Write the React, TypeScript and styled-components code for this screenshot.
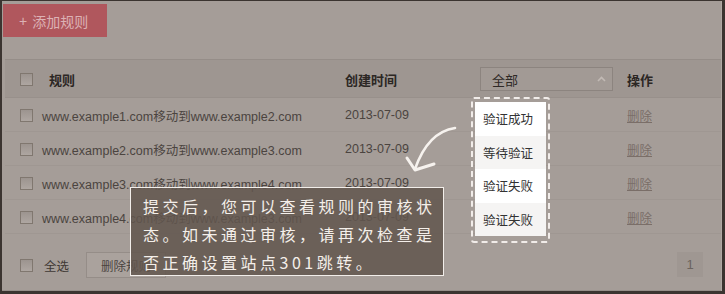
import { FC } from "react";
import styled, { createGlobalStyle } from "styled-components";

const GlobalStyle = createGlobalStyle`
  html, body {
    margin: 0;
    padding: 0;
    background: #3b3430;
  }
  body {
    font-family: "Liberation Sans", "Noto Sans CJK SC", sans-serif;
  }
`;

const Frame = styled.div`
  width: 725px;
  height: 294px;
  box-sizing: border-box;
  padding: 1px 3px 3px 2px;
  background: #3b3430;
`;

const Panel = styled.div`
  position: relative;
  height: 100%;
  background: #a59d98;
  box-shadow: inset -1px 0 0 #b0a8a3, inset 0 -1px 0 #968e89;
  display: flex;
  flex-direction: column;
  overflow: hidden;
`;

const Toolbar = styled.div`
  height: 58px;
  box-sizing: border-box;
  padding: 3px 0 0 1px;
`;

const AddButton = styled.button`
  width: 104px;
  height: 33px;
  border: none;
  background: #b0575d;
  color: #dcb2b5;
  font-family: inherit;
  font-size: 14px;
  display: flex;
  align-items: center;
  gap: 5px;
  padding: 0 0 0 16px;
`;

const Plus = styled.span`
  font-size: 14px;
  line-height: 1;
`;

const Table = styled.div`
  margin: 0 1px 0 3px;
  border-top: 1px solid #958d88;
`;

const Row = styled.div<{ head?: boolean }>`
  display: grid;
  grid-template-columns: 22px 303px 135px 147px 1fr;
  align-items: center;
  height: ${({ head }) => (head ? "38px" : "34px")};
  padding-left: 15px;
  background: ${({ head }) => (head ? "#9e9691" : "transparent")};
  box-shadow: inset 0 -1px 0 rgba(0, 0, 0, 0.035);
  font-size: ${({ head }) => (head ? "13px" : "12.5px")};
  font-weight: ${({ head }) => (head ? 700 : 400)};
  color: ${({ head }) => (head ? "#2c2724" : "#4b4440")};
`;

const HeadLabel = styled.span`
  padding-left: 7px;
`;

const Check = styled.span`
  display: block;
  width: 11px;
  height: 11px;
  border: 1px solid #80776f;
  background: linear-gradient(#9c948f, #aea6a1);
`;

const Select = styled.div`
  width: 133px;
  height: 24px;
  box-sizing: border-box;
  border: 1px solid #8c847f;
  background: #a29a95;
  display: flex;
  align-items: center;
  justify-content: space-between;
  padding: 0 6px 0 11px;
  font-weight: 400;
  color: #2e2926;
`;

const Caret = styled.svg`
  width: 9px;
  height: 6px;
`;

const DeleteLink = styled.a`
  color: #7a6e68;
  text-decoration: underline;
`;

const Footer = styled.div`
  flex: 1;
  display: flex;
  align-items: flex-start;
  padding: 18px 19px 0 18px;
`;

const SelectAll = styled.label`
  display: flex;
  align-items: center;
  gap: 11px;
  height: 26px;
  font-size: 12.5px;
  color: #3e3834;
`;

const FooterButton = styled.button`
  margin-left: 17px;
  height: 26px;
  padding: 0 14px;
  border: 1px solid #958d88;
  background: #aaa29d;
  font-family: inherit;
  font-size: 12.5px;
  color: #4b4440;
`;

const Pager = styled.span`
  margin-left: auto;
  width: 26px;
  height: 25px;
  background: #9f9792;
  color: #6b635e;
  font-size: 13px;
  display: flex;
  align-items: center;
  justify-content: center;
`;

const Dropdown = styled.div`
  position: absolute;
  left: 469px;
  top: 96px;
  width: 79px;
  box-sizing: border-box;
  border: 2px dashed #f1ece9;
  border-radius: 3px;
  padding: 3px 2px 5px 2px;
`;

const Option = styled.div<{ shade?: boolean }>`
  height: 33.5px;
  display: flex;
  align-items: center;
  padding-left: 8px;
  background: ${({ shade }) => (shade ? "#f5f4f3" : "#ffffff")};
  color: #333;
  font-size: 12.5px;
`;

const Arrow = styled.svg`
  position: absolute;
  left: 398px;
  top: 119px;
  width: 60px;
  height: 56px;
`;

const Callout = styled.div`
  position: absolute;
  left: 128px;
  top: 186px;
  width: 314px;
  height: 89px;
  box-sizing: border-box;
  border: 1px solid #f2eeea;
  background: rgba(98, 86, 78, 0.86);
  padding: 4px 0 0 12px;
  font-family: "Noto Sans CJK SC", sans-serif;
  font-size: 16px;
  line-height: 28px;
  letter-spacing: 3.5px;
  color: #f4efea;
`;

const rules = [
  { from: "www.example1.com", to: "www.example2.com" },
  { from: "www.example2.com", to: "www.example3.com" },
  { from: "www.example3.com", to: "www.example4.com" },
  { from: "www.example4.com", to: "www.example3.com" },
];

const statuses = ["验证成功", "等待验证", "验证失败", "验证失败"];

const App: FC = () => {
  return (
    <Frame>
      <GlobalStyle />
      <Panel>
        <Toolbar>
          <AddButton>
            <Plus>+</Plus>添加规则
          </AddButton>
        </Toolbar>
        <Table>
          <Row head>
            <Check />
            <HeadLabel>规则</HeadLabel>
            <span>创建时间</span>
            <Select>
              全部
              <Caret viewBox="0 0 9 6">
                <path d="M1 5 L4.5 1.5 L8 5" fill="none" stroke="#c2bab5" strokeWidth="1.6" />
              </Caret>
            </Select>
            <span>操作</span>
          </Row>
          {rules.map((r) => (
            <Row key={r.from}>
              <Check />
              <span>
                {r.from}移动到{r.to}
              </span>
              <span>2013-07-09</span>
              <span />
              <span>
                <DeleteLink>删除</DeleteLink>
              </span>
            </Row>
          ))}
        </Table>
        <Footer>
          <SelectAll>
            <Check />
            全选
          </SelectAll>
          <FooterButton>删除规则</FooterButton>
          <Pager>1</Pager>
        </Footer>

        <Dropdown>
          {statuses.map((s, i) => (
            <Option key={i} shade={i % 2 === 1}>
              {s}
            </Option>
          ))}
        </Dropdown>

        <Arrow viewBox="0 0 60 56">
          <path
            d="M55 8 Q28 12 15 49"
            fill="none"
            stroke="#f6f2ee"
            strokeWidth="2.6"
            strokeLinecap="round"
          />
          <path
            d="M7 38 L15 50 L34 44"
            fill="none"
            stroke="#f6f2ee"
            strokeWidth="3"
            strokeLinecap="round"
            strokeLinejoin="round"
          />
        </Arrow>

        <Callout>
          提交后，您可以查看规则的审核状
          <br />
          态。如未通过审核，请再次检查是
          <br />
          否正确设置站点301跳转。
        </Callout>
      </Panel>
    </Frame>
  );
};

export default App;
